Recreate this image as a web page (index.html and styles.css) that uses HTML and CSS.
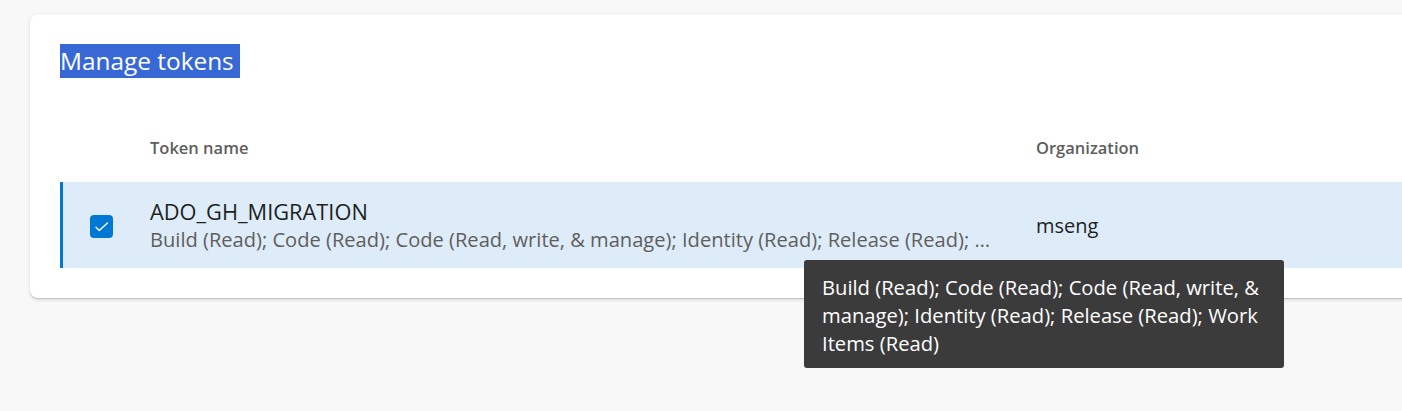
FILE: index.html
```html
<!DOCTYPE html>
<html lang="en">
<head>
<meta charset="utf-8">
<title>Manage tokens</title>
<link rel="stylesheet" href="styles.css">
</head>
<body>
<div class="page">
  <section class="card">
    <h1 class="title"><span class="title-sel">Manage tokens </span></h1>
    <div class="table">
      <div class="thead">
        <div class="cell-check"></div>
        <div class="cell-name">Token name</div>
        <div class="cell-org">Organization</div>
      </div>
      <div class="row selected">
        <div class="cell-check">
          <span class="checkbox">
            <svg width="23" height="23" viewBox="0 0 23 23"><path d="M6 12.2 L9.3 15.4 L17.4 7.9" fill="none" stroke="#fff" stroke-width="1.4" stroke-linecap="round" stroke-linejoin="round"/></svg>
          </span>
        </div>
        <div class="cell-name">
          <div class="token-name">ADO_GH_MIGRATION</div>
          <div class="token-scopes">Build (Read); Code (Read); Code (Read, write, &amp; manage); Identity (Read); Release (Read); …</div>
        </div>
        <div class="cell-org org-value">mseng</div>
      </div>
    </div>
  </section>
  <div class="tooltip">Build (Read); Code (Read); Code (Read, write, &amp; manage); Identity (Read); Release (Read); Work Items (Read)</div>
</div>
</body>
</html>
```
FILE: styles.css
```css
html, body {
  margin: 0;
  padding: 0;
  background: #f8f8f8;
  overflow: hidden;
}
body {
  font-family: "Segoe UI", "Open Sans", "Noto Sans", sans-serif;
  color: #201f1e;
}
.page {
  position: relative;
  width: 1402px;
  height: 411px;
  padding: 14px 0 0 30px;
  box-sizing: border-box;
}
.card {
  width: 1420px;
  height: 284px;
  background: #fff;
  border-radius: 8px;
  box-shadow: 0 1.6px 3.6px rgba(0,0,0,0.13), 0 0.3px 0.9px rgba(0,0,0,0.11);
  padding: 30px 0 0 30px;
  box-sizing: border-box;
}
.title {
  margin: 0;
  font-weight: 400;
  font-size: 24.4px;
  line-height: 34px;
  height: 34px;
}
.title-sel {
  display: inline-block;
  background: #3768d5;
  color: #fff;
  white-space: pre;
}
.thead {
  display: flex;
  align-items: center;
  padding-top: 60px;
  padding-bottom: 24px;
  height: 20px;
  font-size: 16.5px;
  font-weight: 600;
  color: #605e5c;
  line-height: 20px;
}
.cell-check {
  width: 90px;
  flex: none;
  box-sizing: border-box;
  padding-left: 30px;
}
.cell-name {
  width: 886px;
  flex: none;
  box-sizing: border-box;
  padding-right: 30px;
  min-width: 0;
}
.cell-org {
  flex: 1;
}
.row {
  display: flex;
  align-items: center;
  height: 86px;
}
.row.selected {
  background: #deecf9;
  box-shadow: inset 3px 0 0 #0078d4;
}
.checkbox {
  display: flex;
  width: 23px;
  height: 23px;
  border-radius: 4px;
  background: #0078d4;
  margin-top: 3px;
}
.token-name {
  font-size: 21.8px;
  line-height: 28px;
  color: #201f1e;
  margin-top: 1px;
}
.token-scopes {
  font-size: 20.1px;
  line-height: 28px;
  color: #605e5c;
  white-space: nowrap;
}
.org-value {
  font-size: 20px;
  line-height: 28px;
  color: #201f1e;
  margin-top: 2px;
}
.tooltip {
  position: absolute;
  left: 804px;
  top: 260px;
  width: 480px;
  height: 108px;
  box-sizing: border-box;
  padding: 13px 18px 0 18px;
  background: #3b3b3b;
  color: #fff;
  border-radius: 3px;
  font-size: 20.2px;
  line-height: 28px;
}
```
